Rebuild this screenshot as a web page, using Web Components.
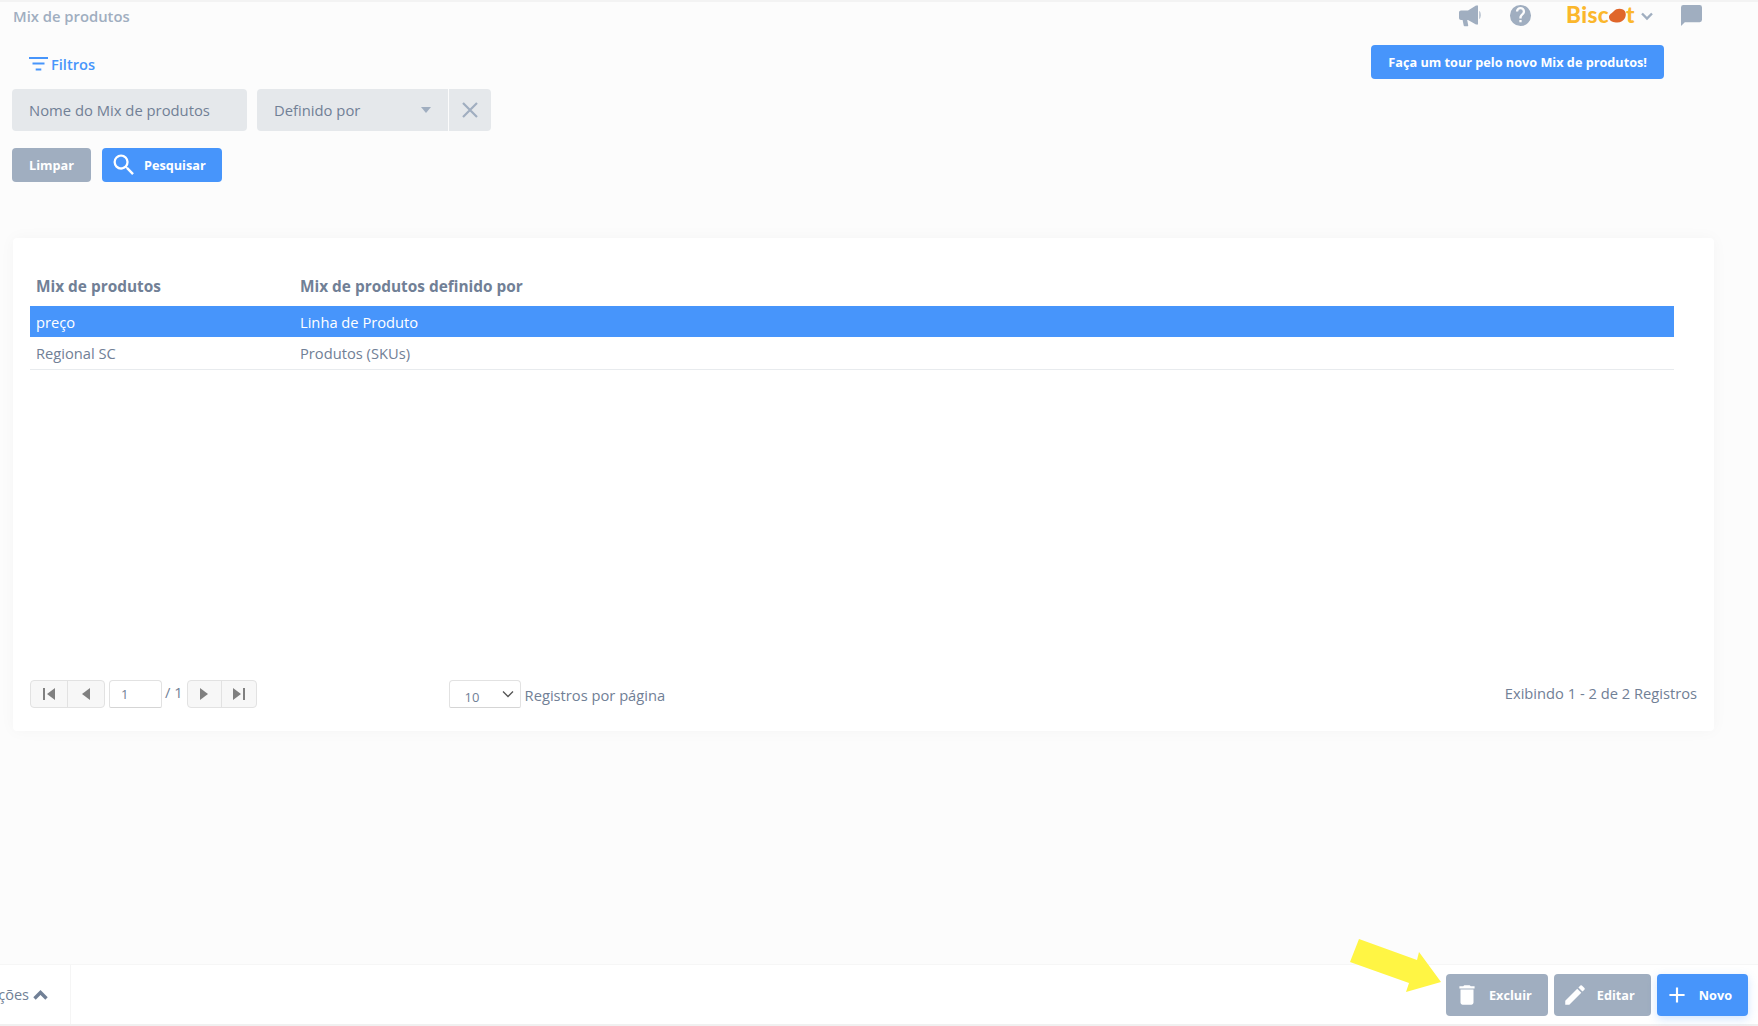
<!DOCTYPE html>
<html lang="pt-BR">
<head>
<meta charset="utf-8">
<title>Mix de produtos</title>
<style>
  html, body { margin: 0; height: 100%; }
  body { background: #fcfcfc; font-family: "Open Sans", sans-serif; color: #718096; overflow: hidden; }
</style>
</head>
<body>
<mix-page></mix-page>

<script>
/** Small helper, every component fills its own open shadow root */
class BaseElement extends HTMLElement {
  constructor() {
    super();
    this.attachShadow({ mode: 'open' });
    this.shadowRoot.innerHTML = this.markup();
  }
  markup() { return ''; }
}

const ICONS = {
  search: '<svg viewBox="0 0 24 24" fill="currentColor"><path d="M15.5 14h-.79l-.28-.27A6.47 6.47 0 0 0 16 9.5 6.5 6.5 0 1 0 9.5 16c1.61 0 3.09-.59 4.23-1.57l.27.28v.79l5 4.99L20.49 19l-4.99-5zm-6 0C7.01 14 5 11.99 5 9.5S7.01 5 9.5 5 14 7.01 14 9.5 11.99 14 9.5 14z"/></svg>',
  trash: '<svg viewBox="0 0 24 24" fill="currentColor"><path d="M6 19c0 1.1.9 2 2 2h8c1.1 0 2-.9 2-2V7H6v12zM19 4h-3.5l-1-1h-5l-1 1H5v2h14V4z"/></svg>',
  pencil: '<svg viewBox="0 0 24 24" fill="currentColor"><path d="M3 17.25V21h3.75L17.81 9.94l-3.75-3.75L3 17.25zM20.71 7.04a1 1 0 0 0 0-1.41l-2.34-2.34a1 1 0 0 0-1.41 0l-1.83 1.83 3.75 3.75 1.83-1.83z"/></svg>',
  plus: '<svg viewBox="0 0 24 24" fill="currentColor"><path d="M19 13h-6v6h-2v-6H5v-2h6V5h2v6h6v2z"/></svg>'
};

class UiButton extends BaseElement {
  connectedCallback() {
    const icon = this.getAttribute('icon');
    if (icon) this.shadowRoot.querySelector('.icon').innerHTML = ICONS[icon];
  }
  markup() {
    return `
      <style>
        :host {
          display: inline-flex;
          align-items: center;
          box-sizing: border-box;
          height: var(--btn-height, 34px);
          padding: var(--btn-padding, 0 17px);
          gap: var(--btn-gap, 0);
          border-radius: 4px;
          background: #a0aec0;
          color: #fff;
          font: 700 12.7px "Open Sans", sans-serif;
          white-space: nowrap;
        }
        :host([primary]) { background: #4795fb; }
        .icon { display: flex; }
        .icon:empty { display: none; }
        .icon svg { width: var(--icon-size, 24px); height: var(--icon-size, 24px); }
      </style>
      <span class="icon"></span><slot></slot>
    `;
  }
}

class AppTopbar extends BaseElement {
  markup() {
    return `
      <style>
        :host { display: flex; align-items: center; height: 27px; padding: 0 56px 0 13px; color: #a0aec0; }
        .title { flex: 1; font-size: 14.800px; font-weight: 600; }
        .tools { display: flex; align-items: center; }
        .logo { display: flex; align-items: center; margin-left: 34px; font: 900 22.500px/1 Lato, sans-serif; color: #fbb72c; letter-spacing: .4px; }
        .logo svg { margin: 0 -1px; }
        .chevron { margin: 1px 1px 0 5px; }
        .chat { margin-left: 26px; }
        .help { margin-left: 27px; }
      </style>
      <span class="title">Mix de produtos</span>
      <div class="tools">
        <svg width="24" height="22" viewBox="0 0 24 22" fill="currentColor"><path d="M1 7.500C1 6.400 1.900 5.500 3 5.500h7L18 .5h2v19h-2l-8-4.500H9.200l1 5.200c.1.6-.3 1-.8 1H6.600c-.4 0-.8-.3-.9-.7L4.600 15H3c-1.100 0-2-.9-2-2z"/><path d="M21.400 6c1.600 1 1.600 7 0 8z"/></svg>
        <svg class="help" width="23" height="23" viewBox="0 0 24 24" fill="currentColor"><path d="M12 1a11 11 0 1 0 0 22 11 11 0 0 0 0-22zm1.200 18h-2.400v-2.400h2.400V19zm2.500-8.300-1.100 1.100c-.9.9-1.400 1.600-1.400 3.200h-2.400v-.6c0-1.300.5-2.500 1.400-3.400l1.500-1.500c.4-.4.7-1 .7-1.600a2.400 2.400 0 0 0-4.800 0H7.200a4.800 4.800 0 0 1 9.600 0c0 1.100-.4 2-1.100 2.800z"/></svg>
        <div class="logo">Bisc<svg width="19" height="17" viewBox="0 0 19 17"><path d="M1 10c0-3 3-3.500 5-6 2-2.500 6-3 9-1.500 3 1.500 3.500 5.500 2 8.500s-5 5-9 4.500C4 15 1 13.500 1 10z" fill="#e0662a"/></svg>t</div>
        <svg class="chevron" width="14" height="14" viewBox="0 0 14 14" fill="none" stroke="currentColor" stroke-width="2.400"><path d="M2 4.500l5 5 5-5"/></svg>
        <svg class="chat" width="21" height="21" viewBox="0 0 22 22" fill="currentColor"><path d="M2.500 0h17A2.500 2.500 0 0 1 22 2.500v13a2.500 2.500 0 0 1-2.500 2.500H4l-4 4V2.500A2.500 2.500 0 0 1 2.500 0z"/></svg>
      </div>
    `;
  }
}

class FilterPanel extends BaseElement {
  markup() {
    return `
      <style>
        :host { display: block; padding: 16px 94px 0 12px; }
        .head { display: flex; align-items: center; justify-content: space-between; height: 33px; }
        .toggle { display: flex; align-items: center; gap: 3px; margin: 5px 0 0 17px; color: #4795fb; font-size: 14.600px; font-weight: 600; }
        .fields { display: flex; margin-top: 11px; }
        .field {
          display: flex; align-items: center; box-sizing: border-box; height: 42px;
          padding: 0 17px; background: #e5e8eb; border-radius: 4px; font-size: 14.800px; color: #718096;
        }
        .name { width: 235px; margin-right: 10px; }
        .select { width: 191px; justify-content: space-between; border-radius: 4px 0 0 4px; }
        .clear { width: 42px; margin-left: 1px; padding: 0; justify-content: center; border-radius: 0 4px 4px 0; color: #a0aec0; }
        .caret { width: 0; height: 0; border: 5px solid transparent; border-top: 6px solid #a0aec0; border-bottom: 0; }
        .actions { display: flex; gap: 11px; margin-top: 17px; }
        ui-button.search { --btn-padding: 0 16px 0 8px; --btn-gap: 6px; --icon-size: 28px; }
      </style>
      <div class="head">
        <div class="toggle">
          <svg width="19" height="14" viewBox="0 0 19 14" fill="currentColor"><path d="M0 0h19v2H0zM3.500 5.500h12v2h-12zM6.700 11.500h5.600v2H6.700z"/></svg>
          Filtros
        </div>
        <ui-button primary>Faça um tour pelo novo Mix de produtos!</ui-button>
      </div>
      <div class="fields">
        <div class="field name">Nome do Mix de produtos</div>
        <div class="field select">Definido por<span class="caret"></span></div>
        <div class="field clear">
          <svg width="16" height="16" viewBox="0 0 16 16" fill="none" stroke="currentColor" stroke-width="2.200"><path d="M1 1l14 14M15 1L1 15"/></svg>
        </div>
      </div>
      <div class="actions">
        <ui-button>Limpar</ui-button>
        <ui-button class="search" primary icon="search">Pesquisar</ui-button>
      </div>
    `;
  }
}

class PagerBar extends BaseElement {
  markup() {
    return `
      <style>
        :host { display: flex; align-items: flex-start; font-size: 14.700px; color: #718096; }
        .group { display: flex; height: 26px; border: 1px solid #e2e2e2; border-radius: 4px; background: #f7f7f7; }
        .group span { display: flex; align-items: center; justify-content: center; color: #808080; }
        .group span + span { border-left: 1px solid #e2e2e2; }
        .first { width: 36px; }
        .next { width: 33px; }
        .last { width: 34px; }
        .num { box-sizing: border-box; height: 28px; border: 1px solid #e2e2e2; border-bottom-color: #d5d5d5; border-radius: 4px 4px 2px 2px; background: #fff; font-size: 13px; }
        .page { width: 53px; margin: 0 3px 0 4px; padding: 4px 0 0 11px; }
        .of { margin-right: 4px; line-height: 24px; }
        .size { display: flex; justify-content: space-between; width: 72px; margin-left: 192px; padding: 7px 6px 0 15px; }
        .per { margin: 5px 0 0 4px; line-height: 20px; }
        .total { margin: 0 0 0 auto; line-height: 26px; }
      </style>
      <div class="group">
        <span class="first"><svg width="14" height="12" viewBox="0 0 14 12" fill="currentColor"><path d="M1 0h2v12H1zM13 0v12L5 6z"/></svg></span>
        <span class="first"><svg width="10" height="12" viewBox="0 0 10 12" fill="currentColor"><path d="M9 0v12L1 6z"/></svg></span>
      </div>
      <div class="num page">1</div>
      <span class="of">/ 1</span>
      <div class="group">
        <span class="next"><svg width="10" height="12" viewBox="0 0 10 12" fill="currentColor"><path d="M1 0v12l8-6z"/></svg></span>
        <span class="last"><svg width="14" height="12" viewBox="0 0 14 12" fill="currentColor"><path d="M1 0v12l8-6zM11 0h2v12h-2z"/></svg></span>
      </div>
      <div class="num size">10<svg width="12" height="12" viewBox="0 0 12 12" fill="none" stroke="#555" stroke-width="1.300"><path d="M1 3.500l5 5 5-5"/></svg></div>
      <span class="per">Registros por página</span>
      <span class="total">Exibindo 1 - 2 de 2 Registros</span>
    `;
  }
}

class DataCard extends BaseElement {
  markup() {
    return `
      <style>
        :host {
          display: flex; flex-direction: column; box-sizing: border-box; height: 493px; margin: 56px 44px 0 13px;
          padding: 33px 17px 23px 17px; background: #fff; border-radius: 4px;
          box-shadow: 0 0 16px rgba(0, 0, 0, .035);
        }
        table { width: 1644px; border-collapse: collapse; font-size: 14.700px; table-layout: fixed; }
        th, td { padding: 0 0 0 6px; text-align: left; }
        th { height: 35px; padding-bottom: 5px; box-sizing: border-box; font-size: 15.400px; font-weight: 700; color: #718096; }
        td { height: 31px; color: #718096; }
        .name-col { width: 264px; }
        tr.selected td { background: #4795fb; color: #fff; }
        tr.line td { height: 32px; border-bottom: 1px solid #e8ebee; }
        pager-bar { margin: auto 0 0; }
      </style>
      <table>
        <thead>
          <tr><th class="name-col">Mix de produtos</th><th>Mix de produtos definido por</th></tr>
        </thead>
        <tbody>
          <tr class="selected"><td>preço</td><td>Linha de Produto</td></tr>
          <tr class="line"><td>Regional SC</td><td>Produtos (SKUs)</td></tr>
        </tbody>
      </table>
      <pager-bar></pager-bar>
    `;
  }
}

class ActionFooter extends BaseElement {
  markup() {
    return `
      <style>
        :host {
          display: flex; align-items: center; box-sizing: border-box; height: 60px; padding-right: 10px;
          background: #fff; border-top: 1px solid #f6f6f6; position: relative;
        }
        .menu { display: flex; align-items: center; justify-content: flex-end; gap: 4px; box-sizing: border-box; align-self: stretch; width: 71px; padding-right: 22px; border-right: 1px solid #f5f5f5; overflow: hidden; font-size: 14.500px; white-space: nowrap; }
        .menu svg { flex: none; }
        .buttons { display: flex; gap: 6px; margin-left: auto; }
        ui-button { --btn-height: 42px; --btn-gap: 9px; --btn-padding: 0 16px 0 8px; --icon-size: 26px; }
        ui-button[primary] { --btn-padding: 0 16px 0 7px; box-shadow: 0 3px 10px rgba(71, 149, 251, .25); }
        .arrow { position: absolute; left: 1348px; top: -28px; pointer-events: none; }
      </style>
      <div class="menu">ções<svg width="15" height="11" viewBox="0 0 15 11" fill="none" stroke="#718096" stroke-width="3.400"><path d="M1.500 9.500L7.500 3.500l6 6"/></svg></div>
      <div class="buttons">
        <ui-button icon="trash">Excluir</ui-button>
        <ui-button icon="pencil">Editar</ui-button>
        <ui-button icon="plus" primary>Novo</ui-button>
      </div>
      <svg class="arrow" width="96" height="60" viewBox="0 0 96 60"><path d="M11 2l58 21 2-8 22 30-35 10 3-9L2 25z" fill="#fff544"/></svg>
    `;
  }
}

class MixPage extends BaseElement {
  markup() {
    return `
      <style>
        :host { display: flex; flex-direction: column; box-sizing: border-box; height: 1026px; border-top: 2px solid #f3f3f3; border-bottom: 2px solid #f0f0f0; }
        .grow { flex: 1; }
      </style>
      <app-topbar></app-topbar>
      <filter-panel></filter-panel>
      <data-card></data-card>
      <div class="grow"></div>
      <action-footer></action-footer>
    `;
  }
}

customElements.define('ui-button', UiButton);
customElements.define('app-topbar', AppTopbar);
customElements.define('filter-panel', FilterPanel);
customElements.define('pager-bar', PagerBar);
customElements.define('data-card', DataCard);
customElements.define('action-footer', ActionFooter);
customElements.define('mix-page', MixPage);
</script>
</body>
</html>
